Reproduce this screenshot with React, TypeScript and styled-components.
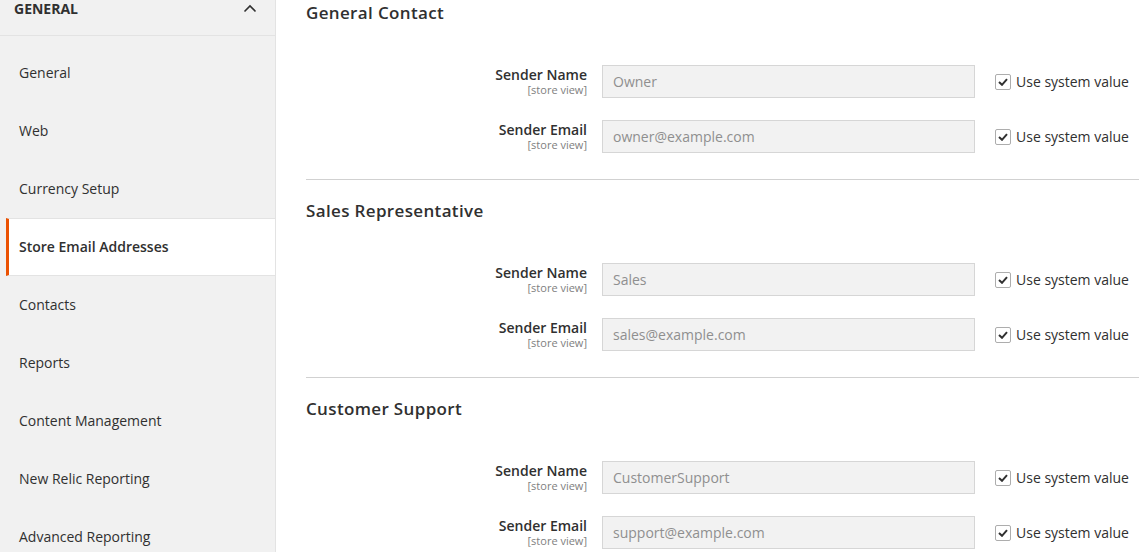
import styled, { createGlobalStyle } from 'styled-components'

const GlobalStyle = createGlobalStyle`
  html, body {
    margin: 0;
    padding: 0;
    background: #fff;
    overflow: hidden;
  }

  body {
    font-family: 'Open Sans', 'Liberation Sans', sans-serif;
    color: #303030;
  }
`

const navItems = [
  'General',
  'Web',
  'Currency Setup',
  'Store Email Addresses',
  'Contacts',
  'Reports',
  'Content Management',
  'New Relic Reporting',
  'Advanced Reporting',
]

const sections = [
  { title: 'General Contact', name: 'Owner', email: 'owner@example.com' },
  { title: 'Sales Representative', name: 'Sales', email: 'sales@example.com' },
  { title: 'Customer Support', name: 'CustomerSupport', email: 'support@example.com' },
]

const ChevronUp = () => (
  <svg width="14" height="9" viewBox="0 0 14 9">
    <polyline points="1.5,7.5 7,2 12.5,7.5" fill="none" stroke="#303030" strokeWidth="1.6" />
  </svg>
)

const CheckMark = () => (
  <svg width="10" height="8" viewBox="0 0 10 8">
    <polyline points="1,4 4,6.8 9,1.2" fill="none" stroke="#303030" strokeWidth="2" />
  </svg>
)

const FieldRow = ({ label, value }: { label: string; value: string }) => (
  <S.Row>
    <S.Label>
      <S.LabelText>{label}</S.LabelText>
      <S.Scope>[store view]</S.Scope>
    </S.Label>
    <S.Input disabled value={value} readOnly />
    <S.Inherit>
      <S.Checkbox>
        <CheckMark />
      </S.Checkbox>
      Use system value
    </S.Inherit>
  </S.Row>
)

export default function App() {
  return (
    <>
      <GlobalStyle />
      <S.Page>
        <S.Sidebar>
          <S.NavHeader>
            GENERAL
            <ChevronUp />
          </S.NavHeader>
          <S.NavList>
            {navItems.map(item => (
              <S.NavItem key={item} $active={item === 'Store Email Addresses'}>
                {item}
              </S.NavItem>
            ))}
          </S.NavList>
        </S.Sidebar>

        <S.Content>
          {sections.map(section => (
            <S.Section key={section.title}>
              <S.Heading>{section.title}</S.Heading>
              <S.Fields>
                <FieldRow label="Sender Name" value={section.name} />
                <FieldRow label="Sender Email" value={section.email} />
              </S.Fields>
            </S.Section>
          ))}
        </S.Content>
      </S.Page>
    </>
  )
}

const S = {
  Page: styled.div`
    display: grid;
    grid-template-columns: 276px 1fr;
    width: 1139px;
    height: 552px;
    overflow: hidden;
  `,

  Sidebar: styled.aside`
    background: #f1f1f1;
    border-right: 1px solid #e3e3e3;
    box-sizing: border-box;
  `,

  NavHeader: styled.div`
    display: flex;
    align-items: flex-start;
    justify-content: space-between;
    height: 35px;
    padding: 0 18px 0 14px;
    border-bottom: 1px solid #e3e3e3;
    font-size: 14px;
    font-weight: 700;
    line-height: 18px;

    svg {
      margin-top: 4px;
    }
  `,

  NavList: styled.ul`
    list-style: none;
    margin: 0;
    padding: 8px 0 0;
  `,

  NavItem: styled.li<{ $active?: boolean }>`
    display: flex;
    align-items: center;
    height: 57.9px;
    box-sizing: border-box;
    margin-left: 6px;
    padding-left: 10px;
    border-left: 3px solid ${p => (p.$active ? '#eb5202' : 'transparent')};
    background: ${p => (p.$active ? '#fff' : 'transparent')};
    font-size: 14px;
    font-weight: ${p => (p.$active ? 600 : 400)};
    ${p => p.$active && 'border-top: 1px solid #e3e3e3; border-bottom: 1px solid #e3e3e3;'}
  `,

  Content: styled.main`
    padding-left: 30px;
  `,

  Section: styled.section`
    padding: 18px 0 26px;
    border-top: 1px solid #d1d1d1;

    &:first-child {
      padding-top: 0;
      border-top: none;
    }
  `,

  Heading: styled.h2`
    margin: 0 0 39px;
    font-size: 17px;
    font-weight: 600;
    line-height: 26px;
    letter-spacing: 0.35px;
  `,

  Fields: styled.div`
    display: flex;
    flex-direction: column;
    gap: 22px;
  `,

  Row: styled.div`
    display: grid;
    grid-template-columns: 281px 373px auto;
    column-gap: 15px;
    align-items: start;
  `,

  Label: styled.div`
    display: flex;
    flex-direction: column;
    align-items: flex-end;
    padding-top: 1px;
  `,

  LabelText: styled.span`
    font-size: 14px;
    font-weight: 600;
    line-height: 18px;
  `,

  Scope: styled.span`
    font-size: 11px;
    line-height: 12px;
    color: #808080;
  `,

  Input: styled.input`
    box-sizing: border-box;
    height: 33px;
    width: 100%;
    padding: 0 10px;
    border: 1px solid #d6d6d6;
    background: #f2f2f2;
    font-family: inherit;
    font-size: 14px;
    color: #8f8f8f;
    outline: none;
  `,

  Inherit: styled.label`
    display: flex;
    align-items: center;
    gap: 5px;
    height: 33px;
    margin-left: 5px;
    font-size: 14px;
    white-space: nowrap;
  `,

  Checkbox: styled.span`
    display: flex;
    align-items: center;
    justify-content: center;
    width: 14px;
    height: 14px;
    border: 1px solid #adadad;
    border-radius: 2px;
    background: #fff;
  `,
}
